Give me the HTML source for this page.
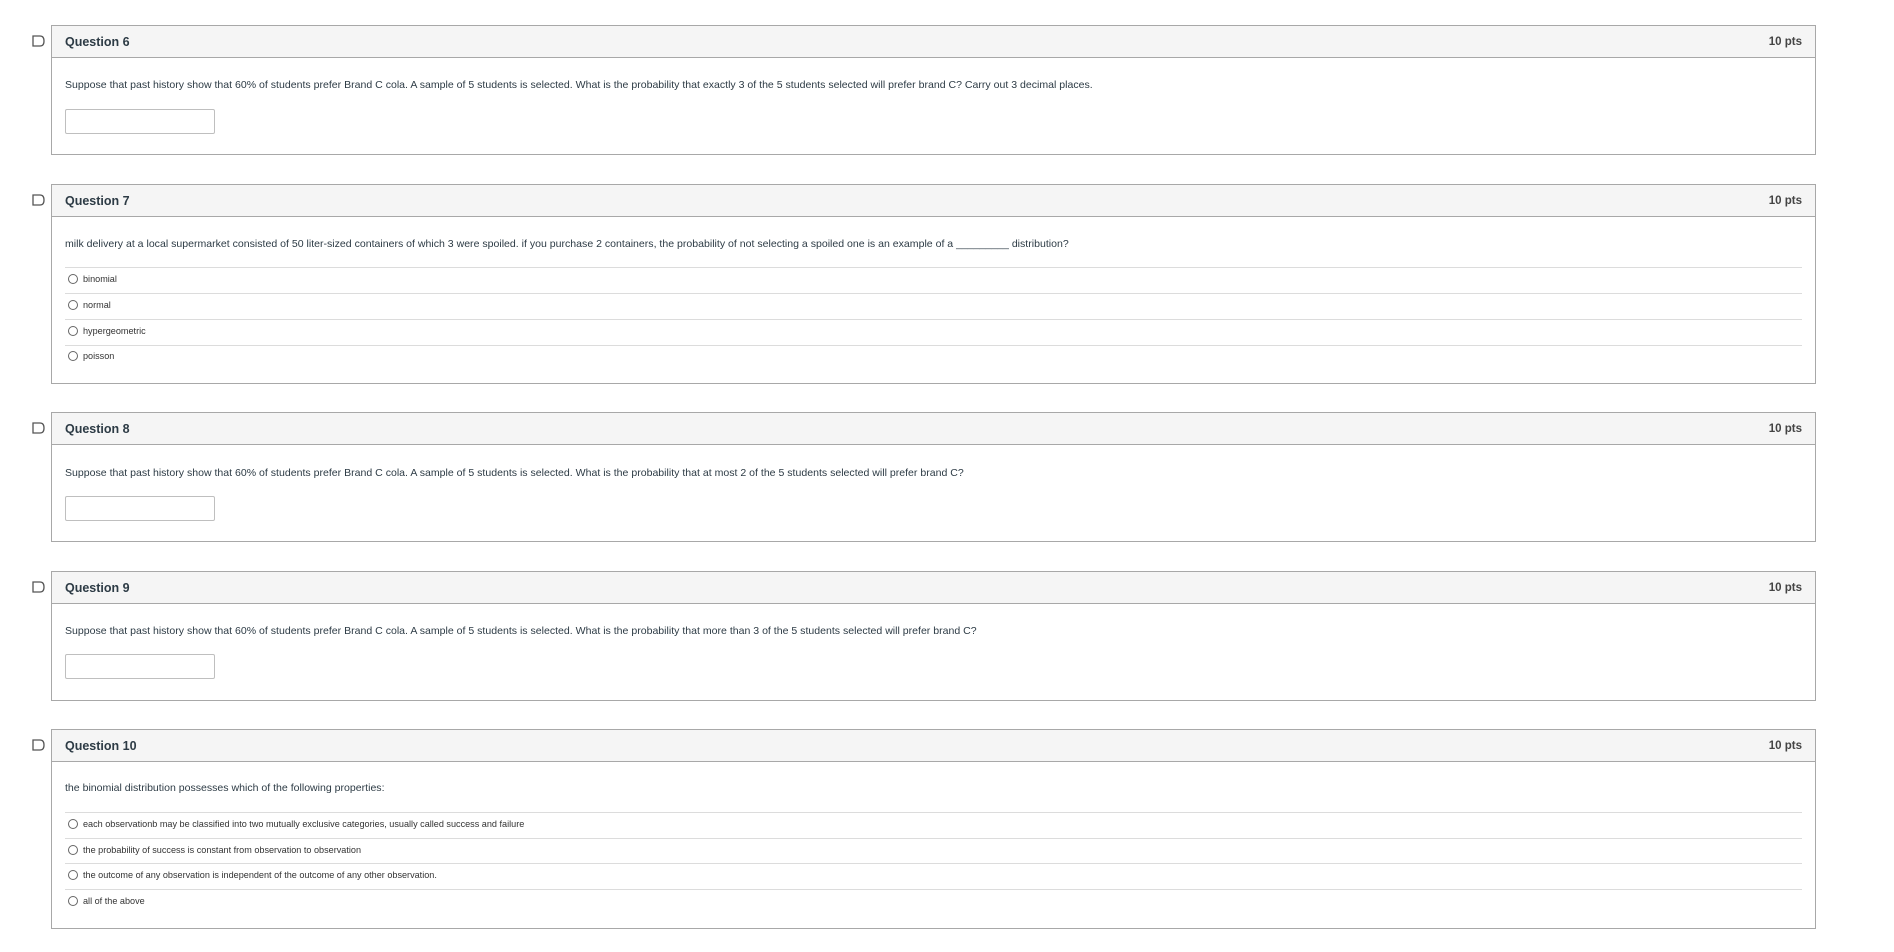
<!DOCTYPE html>
<html><head><meta charset="utf-8"><style>
body{margin:0;width:1894px;height:952px;background:#fff;font-family:"Liberation Sans",sans-serif;color:#2d3b45;position:relative;overflow:hidden}
.ic{position:absolute;left:32px;width:13px;height:12px}
.box{position:absolute;left:51px;width:1765px;border:1px solid #a8a8a8;box-sizing:border-box;background:#fff}
.hd{height:31px;background:#f5f5f5;border-bottom:1px solid #a8a8a8;position:relative}
.hd .t{position:absolute;left:13px;top:9px;font-weight:bold;font-size:12.5px;color:#2d3b45}
.hd .p{position:absolute;right:13px;top:10px;font-weight:bold;font-size:11.5px;color:#444}
.q{position:absolute;left:13px;font-size:10.55px;white-space:nowrap}
.in{position:absolute;left:13px;width:150px;height:25px;border:1px solid #bfbfbf;border-radius:2px;box-sizing:border-box}
.sep{position:absolute;left:13px;right:13px;height:1px;background:#dcdcdc}
.op{position:absolute;left:16px;font-size:9.1px;white-space:nowrap;color:#333}
.op:before{content:"";display:inline-block;width:8px;height:8px;border:1px solid #666;border-radius:50%;vertical-align:-2px;margin-right:5px}
</style></head><body>

<svg class="ic" style="top:35px" viewBox="0 0 13 12"><path d="M1 1H8Q12 1 12 6Q12 11 8 11H1Z" fill="none" stroke="#555" stroke-width="1.3"/></svg>
<div class="box" style="top:25px;height:130px">
 <div class="hd"><span class="t">Question 6</span><span class="p">10 pts</span></div>
 <div class="q" style="top:53px">Suppose that past history show that 60% of students prefer Brand C cola. A sample of 5 students is selected. What is the probability that exactly 3 of the 5 students selected will prefer brand C? Carry out 3 decimal places.</div>
 <div class="in" style="top:83px"></div>
</div>

<svg class="ic" style="top:194px" viewBox="0 0 13 12"><path d="M1 1H8Q12 1 12 6Q12 11 8 11H1Z" fill="none" stroke="#555" stroke-width="1.3"/></svg>
<div class="box" style="top:184px;height:200px">
 <div class="hd"><span class="t">Question 7</span><span class="p">10 pts</span></div>
 <div class="q" style="top:53px">milk delivery at a local supermarket consisted of 50 liter-sized containers of which 3 were spoiled. if you purchase 2 containers, the probability of not selecting a spoiled one is an example of a _________ distribution?</div>
 <div class="sep" style="top:82px"></div>
 <div class="op" style="top:89px">binomial</div>
 <div class="sep" style="top:108px"></div>
 <div class="op" style="top:115px">normal</div>
 <div class="sep" style="top:134px"></div>
 <div class="op" style="top:141px">hypergeometric</div>
 <div class="sep" style="top:160px"></div>
 <div class="op" style="top:166px">poisson</div>
</div>

<svg class="ic" style="top:422px" viewBox="0 0 13 12"><path d="M1 1H8Q12 1 12 6Q12 11 8 11H1Z" fill="none" stroke="#555" stroke-width="1.3"/></svg>
<div class="box" style="top:412px;height:130px">
 <div class="hd"><span class="t">Question 8</span><span class="p">10 pts</span></div>
 <div class="q" style="top:54px">Suppose that past history show that 60% of students prefer Brand C cola. A sample of 5 students is selected. What is the probability that at most 2 of the 5 students selected will prefer brand C?</div>
 <div class="in" style="top:83px"></div>
</div>

<svg class="ic" style="top:581px" viewBox="0 0 13 12"><path d="M1 1H8Q12 1 12 6Q12 11 8 11H1Z" fill="none" stroke="#555" stroke-width="1.3"/></svg>
<div class="box" style="top:571px;height:130px">
 <div class="hd"><span class="t">Question 9</span><span class="p">10 pts</span></div>
 <div class="q" style="top:53px">Suppose that past history show that 60% of students prefer Brand C cola. A sample of 5 students is selected. What is the probability that more than 3 of the 5 students selected will prefer brand C?</div>
 <div class="in" style="top:82px"></div>
</div>

<svg class="ic" style="top:739px" viewBox="0 0 13 12"><path d="M1 1H8Q12 1 12 6Q12 11 8 11H1Z" fill="none" stroke="#555" stroke-width="1.3"/></svg>
<div class="box" style="top:729px;height:200px">
 <div class="hd"><span class="t">Question 10</span><span class="p">10 pts</span></div>
 <div class="q" style="top:52px">the binomial distribution possesses which of the following properties:</div>
 <div class="sep" style="top:82px"></div>
 <div class="op" style="top:89px">each observationb may be classified into two mutually exclusive categories, usually called success and failure</div>
 <div class="sep" style="top:108px"></div>
 <div class="op" style="top:115px">the probability of success is constant from observation to observation</div>
 <div class="sep" style="top:133px"></div>
 <div class="op" style="top:140px">the outcome of any observation is independent of the outcome of any other observation.</div>
 <div class="sep" style="top:159px"></div>
 <div class="op" style="top:166px">all of the above</div>
</div>

</body></html>
